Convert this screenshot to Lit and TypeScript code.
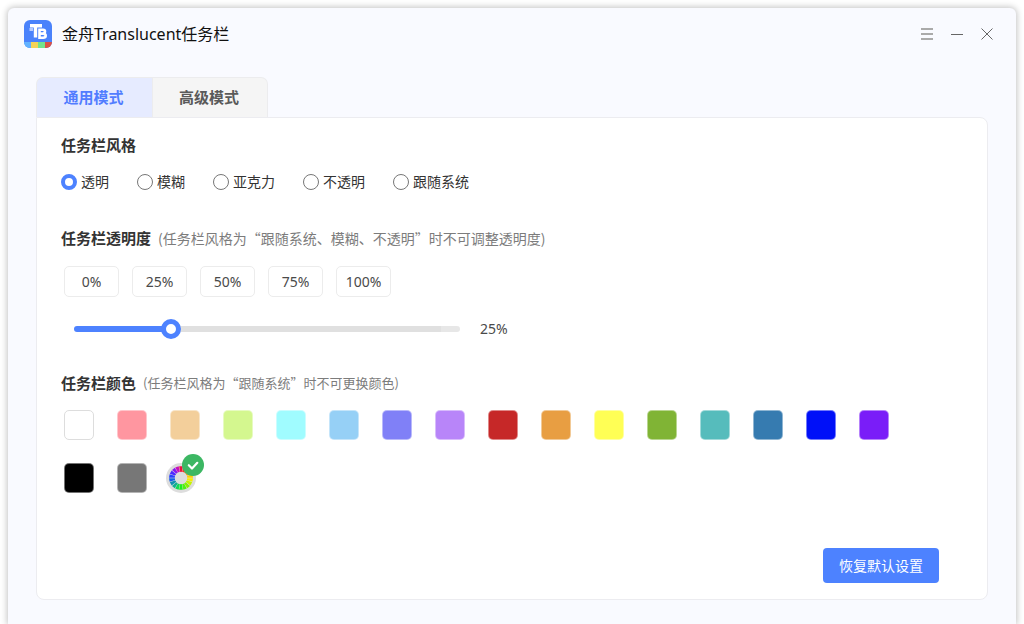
import { LitElement, html, svg, css } from "lit";
import { customElement, state } from "lit/decorators.js";

const STYLES = ["透明", "模糊", "亚克力", "不透明", "跟随系统"];
const PRESETS = [0, 25, 50, 75, 100];
const COLORS = [
  "#ffffff", "#ff96a0", "#f3cf9b", "#d4f78f", "#a0fcff", "#96d0f6", "#8080f7", "#b885f9",
  "#c62828", "#e89e42", "#ffff55", "#80b435", "#56bcbc", "#367bb0", "#0010f8", "#7a1df8",
  "#000000", "#777777",
];
const WHEEL = [
  "#f0103c", "#f8301c", "#ff6a10", "#ffa010", "#ffd000", "#f4f000", "#c4f400", "#84f000", "#50f010",
  "#20ec20", "#10dc50", "#10b090", "#1090b0", "#1460e8", "#2840ff", "#4c28ff", "#8418f0", "#c810b8",
];

@customElement("app-root")
export class AppRoot extends LitElement {
  @state() private tab = 0;
  @state() private mode = 0;
  @state() private opacity = 25;
  @state() private color = "custom";

  static styles = css`
    :host {
      display: block;
      box-sizing: border-box;
      height: 100vh;
      min-height: 620px;
      padding: 8px 8px 0;
      overflow: hidden;
      background: #fff;
      color: #333;
      font-family: "Noto Sans", "Noto Sans CJK SC", sans-serif;
      font-size: 14px;
      line-height: 24px;
    }
    * { box-sizing: border-box; }
    button {
      font: inherit;
      color: inherit;
      margin: 0;
      padding: 0;
      border: 0;
      background: none;
      cursor: pointer;
    }
    svg { display: block; }
    .window {
      display: flex;
      flex-direction: column;
      height: 100%;
      padding: 0 28px 24px;
      background: #f9faff;
      border-radius: 6px 6px 0 0;
      box-shadow: 0 0 6px 1px rgba(0, 0, 0, 0.24);
    }
    .titlebar {
      display: flex;
      align-items: center;
      height: 52px;
      margin: 0 -5px 17px -12px;
    }
    .title {
      flex: 1;
      margin: 0 0 0 10px;
      font-size: 16px;
      font-weight: 400;
      color: #111;
    }
    .controls { display: flex; gap: 18px; }
    .tabs { display: flex; }
    .tab {
      width: 116px;
      height: 40px;
      padding: 0 2px 2px 0;
      border: 1px solid #ececee;
      border-bottom: 0;
      background: #f5f5f5;
      color: #5a5a5a;
      font-size: 15px;
      font-weight: 700;
    }
    .tab:first-child { border-radius: 7px 0 0 0; border-right: 0; }
    .tab:last-child { border-radius: 0 7px 0 0; }
    .tab.active { background: #e6ebff; color: #527dff; }
    .card {
      flex: 1;
      display: flex;
      flex-direction: column;
      padding: 15px 24px 16px;
      background: #fff;
      border: 1px solid #ececf0;
      border-radius: 0 8px 8px 8px;
    }
    .heading { display: flex; gap: 7px; }
    h2 { margin: 0; font-size: 15px; font-weight: 700; line-height: 24px; }
    .hint { color: #7c7c7c; font-family: "Noto Sans CJK SC", sans-serif; }
    .hint.small { font-size: 13px; }
    .radios { display: flex; gap: 28px; margin: 13px 0 32px; }
    .radio { display: flex; align-items: center; gap: 4px; }
    .radio input {
      appearance: none;
      width: 16px;
      height: 16px;
      margin: 0;
      border: 1px solid #777;
      border-radius: 50%;
      background: #fff;
    }
    .radio input:checked { border: 4px solid #4d82ff; }
    .presets { display: flex; gap: 13px; margin: 16px 3px 20px; }
    .preset {
      width: 55px;
      height: 31px;
      border: 1px solid #ececec;
      border-radius: 5px;
      background: #fff;
      color: #4a4a4a;
    }
    .slider { display: flex; align-items: center; gap: 20px; margin: 0 13px 30px; }
    .slider output { color: #4a4a4a; }
    .track {
      display: flex;
      align-items: center;
      width: 386px;
      height: 6px;
      border-radius: 3px;
    }
    .track input {
      appearance: none;
      flex: none;
      width: calc(100% + 20px);
      height: 20px;
      margin: 0 -10px;
      background: none;
    }
    .track input::-webkit-slider-thumb {
      appearance: none;
      width: 20px;
      height: 20px;
      border: 5px solid #4d82ff;
      border-radius: 50%;
      background: #fff;
    }
    .swatches { display: flex; flex-wrap: wrap; gap: 23px; margin: 15px 40px 0 3px; }
    .swatch {
      width: 30px;
      height: 30px;
      border: 1px solid rgba(255, 255, 255, 0.45);
      border-radius: 5px;
    }
    .swatch.white { border-color: #ddd; }
    .wheel {
      display: flex;
      align-items: flex-end;
      justify-content: center;
      width: 30px;
      height: 30px;
    }
    .wheel svg { flex: none; }
    .reset {
      width: 116px;
      height: 35px;
      margin: auto 24px 0 auto;
      border-radius: 4px;
      background: #4d82ff;
      color: #fff;
    }
  `;

  private logo() {
    return svg`<svg width="28" height="28" viewBox="0 0 28 28" aria-hidden="true">
      <defs><clipPath id="round"><rect width="28" height="28" rx="6"/></clipPath></defs>
      <g clip-path="url(#round)">
        <rect width="28" height="28" fill="#4a82fb"/>
        <rect y="22" width="7" height="6" fill="#62b2ff"/>
        <rect x="7" y="22" width="7" height="6" fill="#f5d358"/>
        <rect x="14" y="22" width="7" height="6" fill="#74e28c"/>
        <rect x="21" y="22" width="7" height="6" fill="#db5146"/>
      </g>
      <path d="M5.5 9.5H9" stroke="#b5ccff" stroke-width="3"/>
      <path d="M6 5.8H18M11.5 5.8V17.5" fill="none" stroke="#fff" stroke-width="3.4"/>
      <path d="M15.5 9.8H19Q21 9.9 21 11.6Q21 13.3 19 13.6H15.5M19 13.6Q21.7 13.8 21.7 15.7Q21.7 17.6 19 17.7H15.5V8.5"
        fill="none" stroke="#fff" stroke-width="2.6"/>
    </svg>`;
  }

  private wheel() {
    const step = 360 / WHEEL.length;
    const wedges = WHEEL.map((fill, i) => {
      const a = (i * step - 90 - 8.8) * (Math.PI / 180);
      const b = (i * step - 90 + 8.8) * (Math.PI / 180);
      const p = (r: number, t: number) => `${15 + r * Math.cos(t)} ${24 + r * Math.sin(t)}`;
      return svg`<path d="M${p(6, a)}L${p(12, a)}L${p(12, b)}L${p(6, b)}Z" fill=${fill}/>`;
    });
    return svg`<svg width="38" height="39" viewBox="0 0 38 39" aria-hidden="true">
      <circle cx="15" cy="24" r="15" fill="#ddd"/>
      ${wedges}
      <circle cx="15" cy="24" r="6.2" fill="#ddd"/>
      ${this.color === "custom"
        ? svg`<circle cx="27" cy="11" r="11" fill="#3cb763"/>
          <path d="M22.8 11.2L26 14.5L31.3 8.8" fill="none" stroke="#fff" stroke-width="2.2" stroke-linecap="round" stroke-linejoin="round"/>`
        : null}
    </svg>`;
  }

  private reset() {
    this.mode = 0;
    this.opacity = 25;
    this.color = "custom";
  }

  render() {
    const fill = `linear-gradient(to right, #4d82ff ${this.opacity}%, #e0e0e0 ${this.opacity}%, #e0e0e0 95%, #e7e7e7 95%)`;
    return html`
      <main class="window">
        <header class="titlebar">
          ${this.logo()}
          <h1 class="title">金舟Translucent任务栏</h1>
          <div class="controls">
            <button aria-label="菜单">
              <svg width="12" height="12"><path d="M0 1H12M0 6H12M0 11H12" stroke="#aaa" stroke-width="2"/></svg>
            </button>
            <button aria-label="最小化">
              <svg width="12" height="12"><path d="M0 6.5H12" stroke="#666"/></svg>
            </button>
            <button aria-label="关闭">
              <svg width="12" height="12"><path d="M.5 .5L11.5 11.5M11.5 .5L.5 11.5" stroke="#666"/></svg>
            </button>
          </div>
        </header>
        <nav class="tabs" role="tablist">
          ${["通用模式", "高级模式"].map(
            (name, i) => html`<button
              class="tab ${this.tab === i ? "active" : ""}"
              role="tab"
              aria-selected=${this.tab === i}
              @click=${() => (this.tab = i)}
            >${name}</button>`
          )}
        </nav>
        <section class="card">
          <div class="heading"><h2>任务栏风格</h2></div>
          <div class="radios">
            ${STYLES.map(
              (name, i) => html`<label class="radio">
                <input type="radio" name="style" .checked=${this.mode === i} @change=${() => (this.mode = i)} />
                <span>${name}</span>
              </label>`
            )}
          </div>
          <div class="heading">
            <h2>任务栏透明度</h2>
            <span class="hint">(任务栏风格为“跟随系统、模糊、不透明”时不可调整透明度)</span>
          </div>
          <div class="presets">
            ${PRESETS.map((v) => html`<button class="preset" @click=${() => (this.opacity = v)}>${v}%</button>`)}
          </div>
          <div class="slider">
            <div class="track" style="background:${fill}">
              <input
                type="range"
                min="0"
                max="100"
                aria-label="任务栏透明度"
                .value=${String(this.opacity)}
                @input=${(e: Event) => (this.opacity = Number((e.target as HTMLInputElement).value))}
              />
            </div>
            <output>${this.opacity}%</output>
          </div>
          <div class="heading">
            <h2>任务栏颜色</h2>
            <span class="hint small">(任务栏风格为“跟随系统”时不可更换颜色)</span>
          </div>
          <div class="swatches">
            ${COLORS.map(
              (c) => html`<button
                class="swatch ${c === "#ffffff" ? "white" : ""}"
                style="background:${c}"
                aria-label=${c}
                @click=${() => (this.color = c)}
              ></button>`
            )}
            <button class="wheel" aria-label="自定义颜色" @click=${() => (this.color = "custom")}>${this.wheel()}</button>
          </div>
          <button class="reset" @click=${this.reset}>恢复默认设置</button>
        </section>
      </main>
    `;
  }
}
